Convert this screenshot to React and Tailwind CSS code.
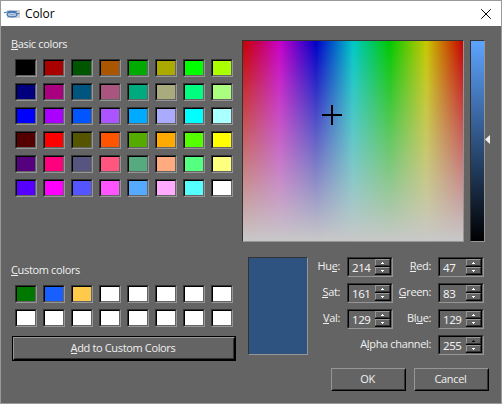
import React from "react";

const basic = [
  ["#000000", "#aa0000", "#005500", "#aa5500", "#00aa00", "#aaaa00", "#00ff00", "#aaff00"],
  ["#00007f", "#aa007f", "#00557f", "#aa557f", "#00aa7f", "#aaaa7f", "#00ff7f", "#aaff7f"],
  ["#0000ff", "#aa00ff", "#0055ff", "#aa55ff", "#00aaff", "#aaaaff", "#00ffff", "#aaffff"],
  ["#550000", "#ff0000", "#555500", "#ff5500", "#55aa00", "#ffaa00", "#55ff00", "#ffff00"],
  ["#55007f", "#ff007f", "#55557f", "#ff557f", "#55aa7f", "#ffaa7f", "#55ff7f", "#ffff7f"],
  ["#5500ff", "#ff00ff", "#5555ff", "#ff55ff", "#55aaff", "#ffaaff", "#55ffff", "#ffffff"],
];
const custom = [
  ["#007800", "#1760ff", "#ffca4b", "#fff", "#fff", "#fff", "#fff", "#fff"],
  ["#fff", "#fff", "#fff", "#fff", "#fff", "#fff", "#fff", "#fff"],
];

function Swatches({ rows }) {
  return (
    <div className="ml-[3px] grid grid-cols-[repeat(8,22px)] gap-1.5">
      {rows.flat().map((c, i) => (
        <div key={i} className="h-[18px] border border-t-[#323232] border-l-[#323232] border-r-[#969696] border-b-[#969696]">
          <div
            className="h-full border border-t-black border-l-black border-r-[#646464] border-b-[#646464]"
            style={{ backgroundColor: c, backgroundClip: "padding-box" }}
          />
        </div>
      ))}
    </div>
  );
}

function Label({ pre = "", hot, post }) {
  return (
    <span className="whitespace-pre">
      {pre}
      <span className="inline-block h-[13px] border-b border-[#f0f0f0] leading-[13px]">{hot}</span>
      {post}
    </span>
  );
}

function Step({ down, off }) {
  return (
    <div className="flex h-[7px] w-[15px] items-center justify-center border border-t-[#969696] border-l-[#969696] border-r-[#323232] border-b-[#323232] bg-[#646464]">
      <svg width="3" height="2" viewBox="0 0 3 2" shapeRendering="crispEdges" fill={off ? "#111" : "#fff"}>
        {down ? <path d="M0 0h3v1H2v1H1V1H0z" /> : <path d="M1 0h1v1h1v1H0V1h1z" />}
      </svg>
    </div>
  );
}

function Spin({ value, off }) {
  return (
    <div className="h-5 w-[46px] border border-t-[#323232] border-l-[#323232] border-r-[#969696] border-b-[#969696] text-left">
      <div className="flex h-full justify-between border border-t-black border-l-black border-r-[#646464] border-b-[#646464] pl-[3px]">
        <span className="font-['Noto_Sans',sans-serif] text-[11.5px] leading-[18px] tracking-[-0.4px]">{value}</span>
        <div className="flex w-4 flex-col gap-px bg-black">
          <Step off={off} />
          <Step down />
        </div>
      </div>
    </div>
  );
}

function Button({ children, className }) {
  return (
    <div className={`h-[23px] border border-t-[#969696] border-l-[#969696] border-r-black border-b-black ${className}`}>
      <div className="flex h-full items-center justify-center border border-t-[#646464] border-l-[#646464] border-r-[#323232] border-b-[#323232] pr-0.5">
        {children}
      </div>
    </div>
  );
}

export default function App() {
  return (
    <div className="flex h-[404px] w-[502px] flex-col border border-[#999] bg-[#646464] font-['Open_Sans','Noto_Sans',sans-serif] text-[11px] tracking-[-0.35px] text-[#f0f0f0]">
      <header className="flex h-[25px] shrink-0 items-center bg-white pl-[3px] pr-[10px] text-black">
        <svg width="16" height="8" viewBox="0 0 16 8">
          <path d="M3 0h13v8H3z" fill="#d2d2d2" />
          <ellipse cx="8" cy="4.5" rx="5" ry="2.4" fill="#b9cbe2" stroke="#3b70b4" strokeWidth="1.1" />
          <path d="M0 2.8Q6 .2 13 1.7M12.5 3.6h3" fill="none" stroke="#3b70b4" />
          <path d="M6 4.5h4.5" stroke="#7f9fca" strokeWidth=".8" />
        </svg>
        <span className="ml-[5px] grow text-[12px] tracking-[-0.1px]">Color</span>
        <svg width="10" height="10" viewBox="0 0 10 10" stroke="#000">
          <path d="M.2.2l9.6 9.6M9.8.2L.2 9.8" />
        </svg>
      </header>
      <div className="flex grow">
        <section className="ml-[11px] w-[224px]">
          <div className="-ml-px mt-[10px] h-[23px] leading-4"><Label hot="B" post="asic colors" /></div>
          <Swatches rows={basic} />
          <div className="-ml-px mt-[65px] h-[23px] leading-4"><Label hot="C" post="ustom colors" /></div>
          <Swatches rows={custom} />
          <div className="mt-[9px] h-[25px] border border-black">
            <Button className="w-full"><Label hot="A" post="dd to Custom Colors" /></Button>
          </div>
        </section>
        <section className="ml-1.5 w-[248px]">
          <div className="mt-[14px] flex">
            <div className="h-[202px] w-[222px] border border-t-[#323232] border-l-[#323232] border-r-[#969696] border-b-[#969696]">
              <div className="relative h-full bg-[linear-gradient(to_bottom,rgba(200,200,200,0),rgb(200,200,200)),linear-gradient(to_right,#c80000,#c800c8,#0000c8,#00c8c8,#00c800,#c8c800,#c80000)]">
                <div className="absolute left-[79px] top-[73px] h-0.5 w-5 bg-black" />
                <div className="absolute left-[88px] top-[64px] h-5 w-0.5 bg-black" />
              </div>
            </div>
            <div className="ml-1.5 h-[202px] w-[15px] border border-t-[#323232] border-l-[#323232] border-r-[#969696] border-b-[#969696] bg-[linear-gradient(to_bottom,#5da4ff,#000)]" />
            <svg className="mt-[95px]" width="5" height="9" viewBox="0 0 5 9">
              <path d="M5 0v9L0 4.5z" fill="#f0f0f0" />
            </svg>
          </div>
          <div className="mt-[15px] flex">
            <div className="ml-1.5 h-[98px] w-[60px] border border-t-[#323232] border-l-[#323232] border-r-[#969696] border-b-[#969696] bg-[#2f5381]" />
            <div className="w-[176px]">
              <div className="grid grid-cols-[32px_53px_38px_53px] gap-y-1.5 text-right leading-[18px]">
                <Label pre="Hu" hot="e" post=":" />
                <div className="pl-[7px]"><Spin value="214" /></div>
                <Label hot="R" post="ed:" />
                <div className="pl-[7px]"><Spin value="47" /></div>
                <Label hot="S" post="at:" />
                <div className="pl-[7px]"><Spin value="161" /></div>
                <Label hot="G" post="reen:" />
                <div className="pl-[7px]"><Spin value="83" /></div>
                <Label hot="V" post="al:" />
                <div className="pl-[7px]"><Spin value="129" /></div>
                <Label pre="Bl" hot="u" post="e:" />
                <div className="pl-[7px]"><Spin value="129" /></div>
              </div>
              <div className="mt-1.5 flex justify-end leading-[18px]">
                <Label pre="A" hot="l" post="pha channel:" />
                <div className="ml-[7px]"><Spin value="255" off /></div>
              </div>
            </div>
          </div>
          <div className="ml-[89px] mt-[13px] flex gap-2">
            <Button className="w-[75px]">OK</Button>
            <Button className="w-[75px]">Cancel</Button>
          </div>
        </section>
      </div>
    </div>
  );
}
